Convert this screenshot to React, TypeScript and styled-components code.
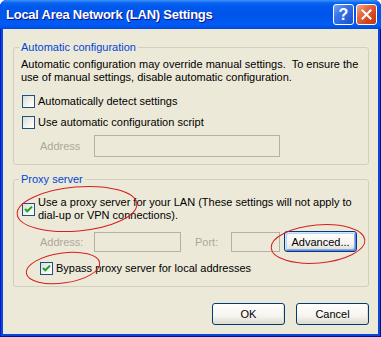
import React from 'react';
import styled, { createGlobalStyle } from 'styled-components';

const GlobalStyle = createGlobalStyle`
  html, body {
    margin: 0;
    padding: 0;
    background: #ffffff;
  }
  body {
    font-family: "Liberation Sans", Arial, sans-serif;
    font-size: 11px;
    color: #000;
  }
`;

const Window = styled.div`
  position: relative;
  width: 381px;
  height: 337px;
  display: flex;
  flex-direction: column;
  background: #0A47D8;
  border-radius: 7px 7px 0 0;
  overflow: hidden;
  box-shadow: inset 1px 0 0 #0019CF, inset -1px 0 0 #00138C, inset 0 -1px 0 #00138C;
`;

const TitleBar = styled.div`
  flex: none;
  height: 29px;
  display: flex;
  align-items: center;
  padding: 0 4px 0 6px;
  background: linear-gradient(
    to bottom,
    #3D95FF 0,
    #0A62EE 3px,
    #0058EE 7px,
    #0054E8 55%,
    #005CF6 85%,
    #0049D6 100%
  );
`;

const Title = styled.span`
  flex: 1;
  color: #fff;
  font: bold 13px "Liberation Sans", Arial, sans-serif;
  letter-spacing: -0.25px;
  text-shadow: 1px 1px #0F1089;
`;

const CaptionButton = styled.div<{ $variant: 'help' | 'close' }>`
  width: 21px;
  height: 21px;
  box-sizing: border-box;
  margin-left: 2px;
  border: 1px solid #fff;
  border-radius: 3px;
  display: flex;
  align-items: center;
  justify-content: center;
  color: #fff;
  font: bold 16px "Liberation Sans", Arial, sans-serif;
  background: ${(p) =>
    p.$variant === 'close'
      ? 'linear-gradient(135deg, #F6A88C 0%, #E46A44 35%, #D4431B 70%, #C03A12 100%)'
      : 'linear-gradient(135deg, #7AA8FA 0%, #3A75EC 35%, #2660DE 70%, #1D50C8 100%)'};
`;

const Body = styled.div`
  flex: 1;
  margin: 0 3px 3px;
  padding: 12px 9px 0 10px;
  background: #ECE9D8;
  display: flex;
  flex-direction: column;
`;

const GroupBox = styled.fieldset<{ $gap?: number }>`
  margin: ${(p) => p.$gap ?? 0}px 0 0;
  padding: 0;
  min-width: 0;
  border: 1px solid #D0D0BF;
  border-radius: 3px;
`;

const Legend = styled.legend`
  margin-left: 5px;
  padding: 0 2px;
  color: #0046D5;
  line-height: 13px;
`;

const GroupContent = styled.div<{ $top: number; $bottom: number }>`
  padding: ${(p) => p.$top}px 8px ${(p) => p.$bottom}px 8px;
  display: flex;
  flex-direction: column;
`;

const Paragraph = styled.div`
  margin-left: -1px;
  line-height: 13px;
  white-space: nowrap;
`;

const Row = styled.div<{ $gap: number; $indent?: number }>`
  display: flex;
  align-items: center;
  margin-top: ${(p) => p.$gap}px;
  padding-left: ${(p) => p.$indent ?? 0}px;
  white-space: nowrap;
`;

const CheckLabel = styled.span`
  margin-left: 3px;
  line-height: 13px;
`;

const Box = styled.span`
  flex: none;
  width: 13px;
  height: 13px;
  box-sizing: border-box;
  border: 1px solid #1C5180;
  background: linear-gradient(135deg, #DCDCD7 0%, #F4F4F0 60%, #FFFFFF 100%);
  display: flex;
  align-items: center;
  justify-content: center;
`;

const FieldLabel = styled.span<{ $width: number; $disabled?: boolean; $offset?: number }>`
  flex: none;
  width: ${(p) => p.$width}px;
  margin-left: ${(p) => p.$offset ?? 0}px;
  color: ${(p) => (p.$disabled ? '#ACA899' : '#000')};
`;

const TextBox = styled.div<{ $width: number; $height: number }>`
  flex: none;
  width: ${(p) => p.$width}px;
  height: ${(p) => p.$height}px;
  box-sizing: border-box;
  border: 1px solid #B4B1A4;
  background: #ECE9D8;
`;

const Button = styled.button<{ $focused?: boolean; $width?: number; $height?: number }>`
  flex: none;
  width: ${(p) => p.$width ?? 73}px;
  height: ${(p) => p.$height ?? 22}px;
  padding: 0;
  margin-left: ${(p) => (p.$focused ? 4 : 0)}px;
  border: 1px solid #003C74;
  border-radius: 3px;
  font: 11px "Liberation Sans", Arial, sans-serif;
  color: #000;
  background: linear-gradient(to bottom, #FFFFFF 0%, #F5F4EF 60%, #E3E0D6 90%, #D6D0C5 100%);
  box-shadow: ${(p) =>
    p.$focused
      ? 'inset 1px 1px 0 #CEE7FF, inset -1px -1px 0 #6982EE, inset 2px 2px 0 #BCD4F6, inset -2px -2px 0 #89ADE4'
      : 'inset -1px -1px 0 #E3E0D6'};
`;

const ButtonRow = styled.div`
  display: flex;
  justify-content: flex-end;
  gap: 11px;
  margin-top: 16px;
`;

const Annotations = styled.svg`
  position: absolute;
  left: 0;
  top: 0;
  pointer-events: none;
`;

const CheckMark = () => (
  <svg width="9" height="9" viewBox="0 0 9 9">
    <path d="M1 4 L3.3 6.3 L8 1.6" fill="none" stroke="#21A121" strokeWidth="2" />
  </svg>
);

const Checkbox: React.FC<{ checked?: boolean }> = ({ checked }) => (
  <Box>{checked && <CheckMark />}</Box>
);

const CloseGlyph = () => (
  <svg width="11" height="11" viewBox="0 0 11 11">
    <path d="M1.5 1.5 L9.5 9.5 M9.5 1.5 L1.5 9.5" stroke="#fff" strokeWidth="2" strokeLinecap="square" />
  </svg>
);

export default function App() {
  return (
    <>
      <GlobalStyle />
      <Window>
        <TitleBar>
          <Title>Local Area Network (LAN) Settings</Title>
          <CaptionButton $variant="help">?</CaptionButton>
          <CaptionButton $variant="close">
            <CloseGlyph />
          </CaptionButton>
        </TitleBar>
        <Body>
          <GroupBox>
            <Legend>Automatic configuration</Legend>
            <GroupContent $top={4} $bottom={7}>
              <Paragraph>
                Automatic configuration may override manual settings.&nbsp; To ensure the
                <br />
                use of manual settings, disable automatic configuration.
              </Paragraph>
              <Row $gap={11}>
                <Checkbox />
                <CheckLabel>Automatically detect settings</CheckLabel>
              </Row>
              <Row $gap={8}>
                <Checkbox />
                <CheckLabel>Use automatic configuration script</CheckLabel>
              </Row>
              <Row $gap={6} $indent={18}>
                <FieldLabel $width={54} $disabled>Address</FieldLabel>
                <TextBox $width={186} $height={22} />
              </Row>
            </GroupContent>
          </GroupBox>

          <GroupBox $gap={8}>
            <Legend>Proxy server</Legend>
            <GroupContent $top={10} $bottom={11}>
              <Row $gap={0}>
                <Checkbox checked />
                <CheckLabel>
                  Use a proxy server for your LAN (These settings will not apply to
                  <br />
                  dial-up or VPN connections).
                </CheckLabel>
              </Row>
              <Row $gap={9} $indent={18}>
                <FieldLabel $width={54} $disabled>Address:</FieldLabel>
                <TextBox $width={87} $height={20} />
                <FieldLabel $width={36} $disabled $offset={14}>Port:</FieldLabel>
                <TextBox $width={49} $height={20} />
                <Button $focused $width={73} $height={21}>Advanced...</Button>
              </Row>
              <Row $gap={10} $indent={18}>
                <Checkbox checked />
                <CheckLabel>Bypass proxy server for local addresses</CheckLabel>
              </Row>
            </GroupContent>
          </GroupBox>

          <ButtonRow>
            <Button>OK</Button>
            <Button>Cancel</Button>
          </ButtonRow>
        </Body>

        <Annotations width="381" height="337" viewBox="0 0 381 337">
          <g fill="none" stroke="#D42020" strokeWidth="1">
            <ellipse cx="77" cy="209" rx="60" ry="22" transform="rotate(-5 77 209)" />
            <ellipse cx="318" cy="244" rx="47" ry="19" transform="rotate(-5 318 244)" />
            <ellipse cx="63" cy="268" rx="37" ry="15" transform="rotate(-8 63 268)" />
          </g>
        </Annotations>
      </Window>
    </>
  );
}
